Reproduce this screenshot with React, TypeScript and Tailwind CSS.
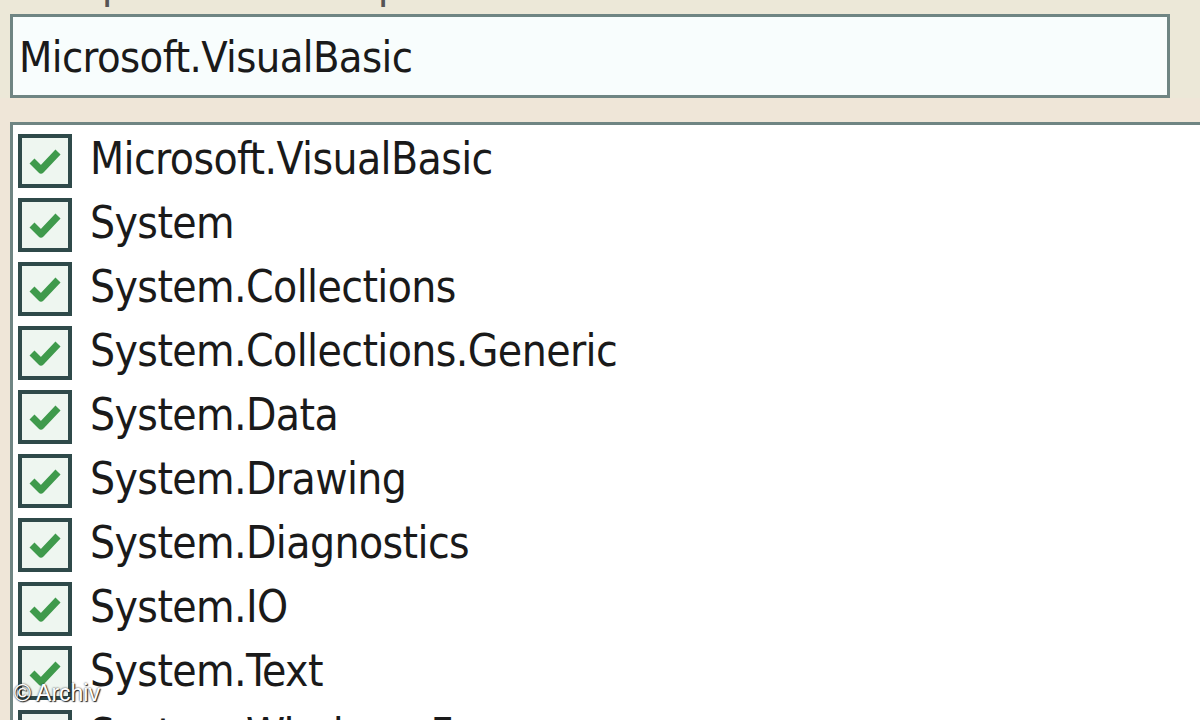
import React from 'react';

const items = [
  'Microsoft.VisualBasic',
  'System',
  'System.Collections',
  'System.Collections.Generic',
  'System.Data',
  'System.Drawing',
  'System.Diagnostics',
  'System.IO',
  'System.Text',
  'System.Windows.Forms',
];

const font = { fontFamily: '"DejaVu Sans Condensed", "DejaVu Sans", Tahoma, sans-serif' };

const CheckBox: React.FC = () => (
  <div className="w-[54px] h-[54px] shrink-0 border-[4px] border-[#2f4a4a] bg-[#eef6f0] flex items-center justify-center">
    <svg width="34" height="30" viewBox="0 0 34 30">
      <path d="M4 15 L13 24 L30 6" fill="none" stroke="#3f9a4c" strokeWidth="7" strokeLinejoin="round" />
    </svg>
  </div>
);

const App: React.FC = () => {
  return (
    <div className="w-[1200px] h-[720px] overflow-hidden bg-[#ece8d8] relative" style={font}>
      {/* label remnant, cut off at the top edge */}
      <div className="h-[14px] relative overflow-hidden">
        <div className="absolute left-[12px] -top-[39px] text-[44px] text-[#555] leading-none">
          ▪ Imported namespaces:
        </div>
      </div>

      {/* text field */}
      <div className="pl-[10px] pr-[30px]">
        <div className="h-[84px] border-[3px] border-[#6f8583] bg-[#f8fdfd] flex items-center pl-[6px] pt-[2px]">
          <span className="text-[43px] text-[#1a1a1a] tracking-[-0.6px]">Microsoft.VisualBasic</span>
        </div>
      </div>

      {/* gap */}
      <div className="h-[24px] bg-[#efe6d8]" />

      {/* list */}
      <div className="pl-[10px] bg-[#efe6d8]">
        <div className="border-t-[3px] border-l-[3px] border-[#6f8583] bg-white pt-[9px] pl-[5px]">
          {items.map(item => (
            <div key={item} className="h-[64px] flex items-start gap-[18px]">
              <CheckBox />
              <span className="text-[44px] leading-[50px] text-[#1a1a1a] tracking-[-0.6px]">{item}</span>
            </div>
          ))}
        </div>
      </div>

      {/* watermark */}
      <div
        className="absolute left-[14px] top-[682px] text-[23px] leading-none text-white"
        style={{ fontFamily: '"Liberation Sans", Arial, sans-serif', textShadow: '0 0 2px #222, 1px 1px 1px #222' }}
      >
        © Archiv
      </div>
    </div>
  );
};

export default App;
